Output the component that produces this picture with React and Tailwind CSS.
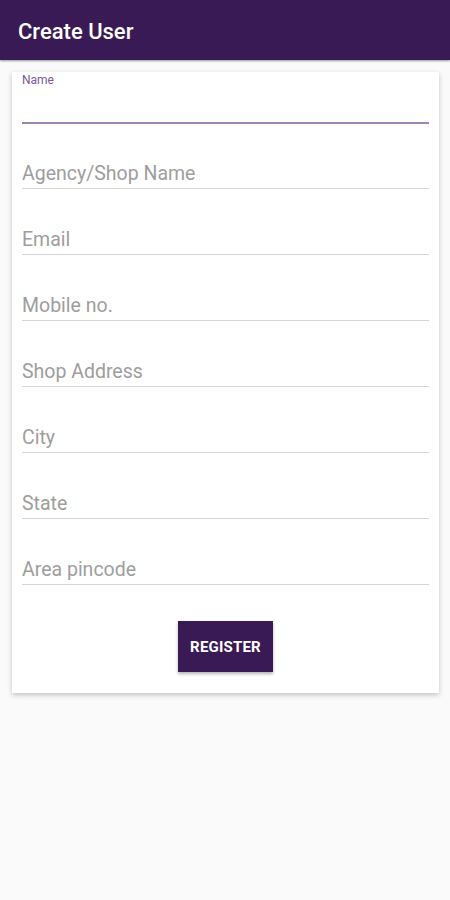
export default function App() {
  const fields = ["Email", "Mobile no.", "Shop Address", "City", "State", "Area pincode"];
  return (
    <div className="min-h-[900px] w-[450px] bg-[#fafafa]" style={{ fontFamily: "Roboto, 'Noto Sans', sans-serif" }}>
      <div className="h-[60px] bg-[#3a1a55] flex items-center px-[18px] pt-[3px] shadow-[0_1px_2px_rgba(0,0,0,0.4)]">
        <span className="text-white text-[22px] font-medium leading-none">Create User</span>
      </div>
      <div className="ml-[12px] mr-[11px] mt-[12px] bg-white shadow-[0_2px_5px_rgba(0,0,0,0.22)] px-[10px] pb-[21px]">
        <div className="h-[52px] flex flex-col justify-between border-b-2 border-[#9c84b6]">
          <span className="text-[12px] leading-[14px] pt-[1px] text-[#7c559c]">Name</span>
        </div>
        <div className="h-[65px] flex items-end border-b border-[#d6d6d6]">
          <span className="text-[19.5px] leading-[24px] pb-[2px] text-[#9e9e9e]">Agency/Shop Name</span>
        </div>
        {fields.map((f) => (
          <div key={f} className="h-[66px] flex items-end border-b border-[#d6d6d6]">
            <span className="text-[19.5px] leading-[24px] pb-[2px] text-[#9e9e9e]">{f}</span>
          </div>
        ))}
        <div className="flex justify-center mt-[36px]">
          <button className="w-[95px] h-[51px] pt-[2px] bg-[#3a1a55] text-white text-[15px] font-bold tracking-[0.2px] shadow-[0_2px_3px_rgba(0,0,0,0.3)]">
            REGISTER
          </button>
        </div>
      </div>
    </div>
  );
}
